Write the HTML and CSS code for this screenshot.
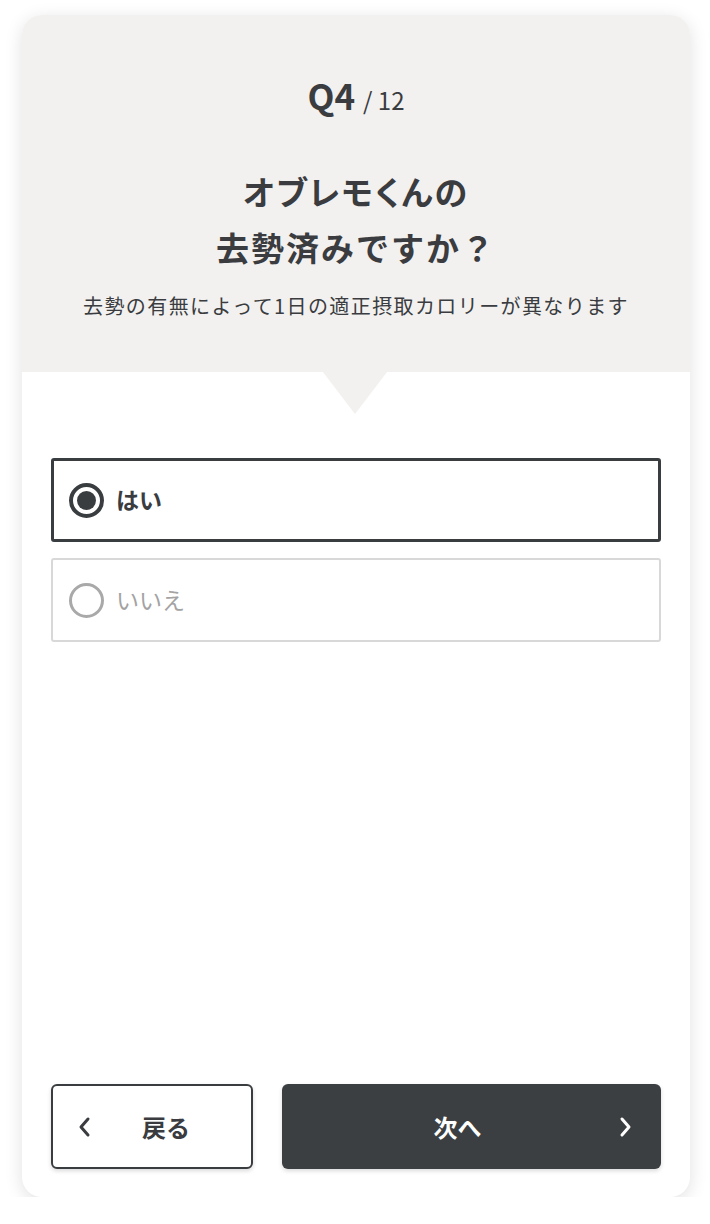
FILE: index.html
```html
<!DOCTYPE html>
<html lang="ja">
<head>
<meta charset="utf-8">
<link rel="stylesheet" href="styles.css">
</head>
<body>
<div class="card">
  <header class="head">
    <div class="count"><span class="q">Q4</span><span class="total">/ 12</span></div>
    <h1 class="title"><span class="t1">オブレモくんの</span><br><span class="t2">去勢済みですか？</span></h1>
    <p class="sub">去勢の有無によって1日の適正摂取カロリーが異なります</p>
    <div class="arrow"></div>
  </header>
  <div class="options">
    <label class="opt selected"><span class="radio"></span><span class="label">はい</span></label>
    <label class="opt"><span class="radio"></span><span class="label">いいえ</span></label>
  </div>
  <div class="nav">
    <button class="btn back">
      <svg class="chev" width="14" height="22" viewBox="0 0 14 22"><path d="M11 3 L4 11 L11 19" fill="none" stroke="currentColor" stroke-width="3" stroke-linecap="round" stroke-linejoin="round"/></svg>
      <span>戻る</span>
    </button>
    <button class="btn next">
      <span class="next-label">次へ</span>
      <svg class="chev" width="14" height="22" viewBox="0 0 14 22"><path d="M3 3 L10 11 L3 19" fill="none" stroke="currentColor" stroke-width="3" stroke-linecap="round" stroke-linejoin="round"/></svg>
    </button>
  </div>
</div>
</body>
</html>
```

FILE: styles.css
```css
* { box-sizing: border-box; }
html, body { margin: 0; padding: 0; background: #fff; }
body {
  font-family: "Noto Sans CJK JP", "Noto Sans", sans-serif;
  color: #3a3c3f;
  padding: 15px 20px 0 22px;
}
.card {
  width: 668px;
  height: 1182px;
  border-radius: 20px;
  background: #fff;
  box-shadow: 0 4px 18px rgba(0,0,0,0.12);
  overflow: hidden;
  display: flex;
  flex-direction: column;
}
.head {
  position: relative;
  background: #f2f1ef;
  height: 357px;
  text-align: center;
  padding-top: 56px;
}
.count { height: 48px; line-height: 48px; }
.q { font-size: 35px; font-weight: 700; }
.total { font-size: 24px; margin-left: 8px; font-weight: 400; }
.title {
  margin: 44px 0 0;
  font-size: 33px;
  font-weight: 700;
  line-height: 56px;
  letter-spacing: 2px;
}
.t1 { font-feature-settings: "palt"; }
.sub {
  margin: 17px 0 0;
  font-size: 20px;
  line-height: 28px;
  letter-spacing: 1.4px;
}
.arrow {
  position: absolute;
  left: 301px;
  bottom: -42px;
  width: 0; height: 0;
  border-left: 32px solid transparent;
  border-right: 32px solid transparent;
  border-top: 42px solid #f2f1ef;
}
.options {
  padding: 86px 29px 0;
  display: flex;
  flex-direction: column;
  gap: 16px;
  flex: 1;
}
.opt {
  display: flex;
  align-items: center;
  height: 84px;
  border: 2px solid #d8d8d8;
  border-radius: 3px;
  padding-left: 16px;
  font-size: 23px;
  color: #a3a3a3;
}
.opt.selected {
  border: 3px solid #3a3d40;
  color: #3a3c3f;
  font-weight: 700;
  padding-left: 15px;
}
.radio {
  width: 35px; height: 35px;
  border-radius: 50%;
  border: 3px solid #a9a9a9;
  margin-right: 12px;
  display: flex;
  align-items: center;
  justify-content: center;
}
.selected .radio { border: 4px solid #3a3d40; }
.selected .radio::after {
  content: "";
  width: 19px; height: 19px;
  border-radius: 50%;
  background: #3a3d40;
}
.label { line-height: 1; padding-bottom: 2px; }
.nav {
  display: flex;
  gap: 29px;
  padding: 0 29px 28px;
}
.btn {
  height: 85px;
  border-radius: 6px;
  font-family: inherit;
  font-size: 24px;
  font-weight: 700;
  display: flex;
  align-items: center;
  box-shadow: 0 2px 4px rgba(0,0,0,0.15);
  cursor: pointer;
}
.back {
  width: 202px;
  background: #fff;
  border: 2px solid #3a3d40;
  color: #3a3c3f;
  padding: 0 0 0 24px;
}
.back span { margin-left: 51px; }
.next {
  flex: 1;
  background: #3c3f42;
  border: none;
  color: #fff;
  justify-content: center;
  position: relative;
}
.next-label { margin-right: 28px; }
.next .chev { position: absolute; right: 28px; top: 32px; }
```
